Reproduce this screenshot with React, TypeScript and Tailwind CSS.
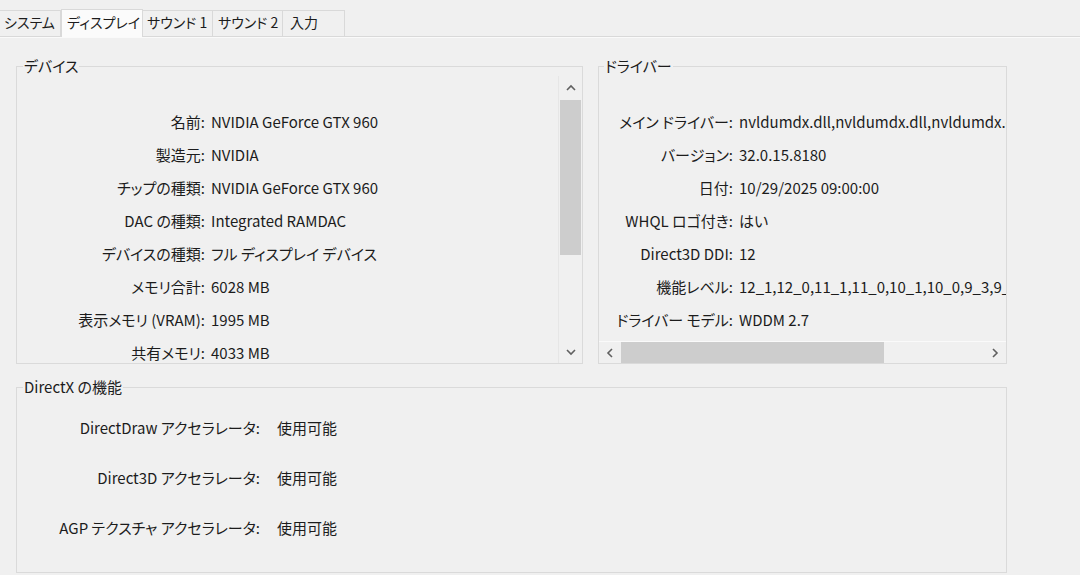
import React from "react";

const Chevron = ({ dir }: { dir: "up" | "down" | "left" | "right" }) => {
  const pts: Record<string, string> = {
    up: "1,6 5,2 9,6",
    down: "1,2 5,6 9,2",
    left: "6,1 2,5 6,9",
    right: "2,1 6,5 2,9",
  };
  const vertical = dir === "up" || dir === "down";
  return (
    <svg
      width={vertical ? 10 : 8}
      height={vertical ? 8 : 10}
      viewBox={vertical ? "0 0 10 8" : "0 0 8 10"}
    >
      <polyline points={pts[dir]} fill="none" stroke="#606060" strokeWidth="1.6" />
    </svg>
  );
};

const Tab = ({ label, cls, active }: { label: string; cls: string; active?: boolean }) => (
  <div
    className={
      active
        ? `${cls} h-[28px] -mb-px pb-[3px] flex items-center border-x border-t border-[#d9d9d9] bg-[#fbfbfb] whitespace-nowrap`
        : `${cls} h-[26px] pb-[3px] flex items-center border-r border-t border-[#d9d9d9] bg-[#f0f0f0] whitespace-nowrap`
    }
  >
    {label}
  </div>
);

const Row = ({
  label,
  value,
  labelW,
  gap,
  h,
}: {
  label: string;
  value: string;
  labelW: string;
  gap: string;
  h: string;
}) => (
  <div className={`flex items-center ${h} whitespace-nowrap`}>
    <div className={`${labelW} shrink-0 text-right`}>{label}</div>
    <div className={`${gap}`}>{value}</div>
  </div>
);

const deviceRows: [string, string][] = [
  ["名前:", "NVIDIA GeForce GTX 960"],
  ["製造元:", "NVIDIA"],
  ["チップの種類:", "NVIDIA GeForce GTX 960"],
  ["DAC の種類:", "Integrated RAMDAC"],
  ["デバイスの種類:", "フル ディスプレイ デバイス"],
  ["メモリ合計:", "6028 MB"],
  ["表示メモリ (VRAM):", "1995 MB"],
  ["共有メモリ:", "4033 MB"],
];

const driverRows: [string, string][] = [
  ["メイン ドライバー:", "nvldumdx.dll,nvldumdx.dll,nvldumdx.dll,nvldumdx.dll"],
  ["バージョン:", "32.0.15.8180"],
  ["日付:", "10/29/2025 09:00:00"],
  ["WHQL ロゴ付き:", "はい"],
  ["Direct3D DDI:", "12"],
  ["機能レベル:", "12_1,12_0,11_1,11_0,10_1,10_0,9_3,9_2,9_1"],
  ["ドライバー モデル:", "WDDM 2.7"],
];

const dxRows: [string, string][] = [
  ["DirectDraw アクセラレータ:", "使用可能"],
  ["Direct3D アクセラレータ:", "使用可能"],
  ["AGP テクスチャ アクセラレータ:", "使用可能"],
];

export default function App() {
  return (
    <div className="w-[1080px] h-[575px] overflow-hidden bg-[#f0f0f0] text-[#1c1c1c] text-[15px] leading-[20px] font-['Noto_Sans_CJK_JP','Noto_Sans',sans-serif] [font-feature-settings:'palt']">
      {/* Tab strip */}
      <div className="h-[37px] flex items-end border-b border-[#d9d9d9] text-[14px]">
        <Tab label="システム" cls="w-[61px] pl-[4px] border-l-0" />
        <Tab label="ディスプレイ" cls="w-[82px] pl-[5px]" active />
        <Tab label="サウンド 1" cls="w-[70px] pl-[4px]" />
        <Tab label="サウンド 2" cls="w-[70px] pl-[5px]" />
        <Tab label="入力" cls="w-[62px] pl-[7px]" />
      </div>
      <div className="h-px bg-[#fafafa]" />

      <div className="pl-[16px] pt-[18px]">
        <div className="flex gap-[15px]">
          {/* Device group */}
          <fieldset className="min-w-0 w-[567px] h-[308px] border border-[#dadada]">
            <legend className="ml-[6px] px-[1px] leading-[20px]">デバイス</legend>
            <div className="h-[287px] flex">
              <div className="flex-1 min-w-0 overflow-hidden pt-[29px]">
                {deviceRows.map(([l, v]) => (
                  <Row key={l} label={l} value={v} labelW="w-[188px]" gap="ml-[6px]" h="h-[33px]" />
                ))}
              </div>
              <div className="w-[24px] shrink-0 flex flex-col items-center border-l border-[#e6e6e6] bg-[#f0f0f0]">
                <div className="h-[24px] w-full flex items-center justify-center">
                  <Chevron dir="up" />
                </div>
                <div className="h-[155px] w-[21px] bg-[#cdcdcd]" />
                <div className="flex-1" />
                <div className="h-[23px] w-full flex items-center justify-center">
                  <Chevron dir="down" />
                </div>
              </div>
            </div>
          </fieldset>

          {/* Driver group */}
          <fieldset className="min-w-0 w-[409px] h-[308px] border border-[#dadada]">
            <legend className="ml-[5px] px-[1px] leading-[20px]">ドライバー</legend>
            <div className="h-[287px] flex flex-col">
              <div className="flex-1 min-h-0 overflow-hidden pt-[29px]">
                {driverRows.map(([l, v]) => (
                  <Row key={l} label={l} value={v} labelW="w-[134px]" gap="ml-[6px]" h="h-[33px]" />
                ))}
              </div>
              <div className="h-[22px] shrink-0 flex items-center border-t border-[#fafafa]">
                <div className="w-[22px] h-full flex items-center justify-center">
                  <Chevron dir="left" />
                </div>
                <div className="w-[263px] h-[21px] bg-[#cdcdcd]" />
                <div className="flex-1" />
                <div className="w-[22px] h-full flex items-center justify-center">
                  <Chevron dir="right" />
                </div>
              </div>
            </div>
          </fieldset>
        </div>

        {/* DirectX group */}
        <fieldset className="min-w-0 mt-[13px] w-[991px] h-[196px] border border-[#dadada]">
          <legend className="ml-[6px] px-[1px] leading-[20px]">DirectX の機能</legend>
          <div className="pt-[6px]">
            {dxRows.map(([l, v]) => (
              <Row key={l} label={l} value={v} labelW="w-[243px]" gap="ml-[17px]" h="h-[50px]" />
            ))}
          </div>
        </fieldset>
      </div>
    </div>
  );
}
